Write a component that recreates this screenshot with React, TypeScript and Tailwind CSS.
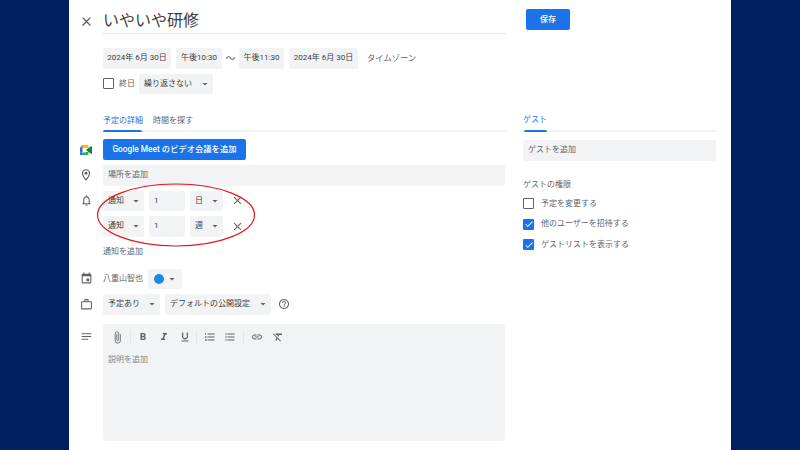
import type { ReactNode } from "react";
import {
  MdArrowDropDown,
  MdAttachFile,
  MdCheck,
  MdClose,
  MdEvent,
  MdFormatBold,
  MdFormatClear,
  MdFormatItalic,
  MdFormatListBulleted,
  MdFormatListNumbered,
  MdFormatUnderlined,
  MdHelpOutline,
  MdLink,
  MdNotes,
  MdOutlineLocationOn,
  MdOutlineNotifications,
  MdOutlineWorkOutline,
} from "react-icons/md";

function Chip({ children, className = "" }: { children: ReactNode; className?: string }) {
  return (
    <div className={`flex h-[20.5px] items-center whitespace-nowrap rounded-[2px] bg-[#f1f3f4] pl-[5px] text-[8px] text-[#3c4043] ${className}`}>
      {children}
    </div>
  );
}

function Select({ label, className = "" }: { label: string; className?: string }) {
  return (
    <Chip className={`justify-between pr-[2px] ${className}`}>
      <span>{label}</span>
      <MdArrowDropDown className="text-[12px] text-[#5f6368]" />
    </Chip>
  );
}

function Row({ icon, className = "", children }: { icon?: ReactNode; className?: string; children: ReactNode }) {
  return (
    <div className={`flex ${className}`}>
      <div className="flex w-[34px] shrink-0 items-center justify-center text-[#5f6368]">{icon}</div>
      {children}
    </div>
  );
}

function Reminder({ unit }: { unit: string }) {
  return (
    <div className="flex items-center gap-[5px]">
      <Select label="通知" className="w-[41px]" />
      <Chip className="w-[36px] text-[8.7px]">1</Chip>
      <Select label={unit} className="w-[33px]" />
      <MdClose className="ml-[3px] text-[13px] text-[#5f6368]" />
    </div>
  );
}

function Permission({ label, checked }: { label: string; checked?: boolean }) {
  return (
    <div className="flex h-[20.5px] items-center gap-[7px] whitespace-nowrap text-[8px] text-[#5f6368]">
      {checked ? (
        <span className="flex h-[11px] w-[11px] items-center justify-center rounded-[1px] bg-[#1a73e8]">
          <MdCheck className="text-[10px] text-white" />
        </span>
      ) : (
        <span className="h-[11px] w-[11px] rounded-[1px] border-[1.5px] border-[#5f6368]" />
      )}
      <span>{label}</span>
    </div>
  );
}

function MeetLogo() {
  return (
    <svg width="12" height="10" viewBox="0 0 24 20">
      <path d="M0 5 L5 0 H15 V5 H5 V5 H0 Z" fill="#ea4335" />
      <path d="M5 0 H15 Q17 0 17 2 V6 H12 V5 H5 Z" fill="#fbbc04" />
      <path d="M0 5 H5 V15 H0 Z" fill="#1a73e8" />
      <path d="M0 15 H5 V20 H2 Q0 20 0 18 Z" fill="#1967d2" />
      <path d="M5 15 H12 V14 H17 V18 Q17 20 15 20 H5 Z" fill="#34a853" />
      <path d="M12 10 L17 6 L23 2 Q24 2 24 3 V17 Q24 18 23 18 L17 14 Z" fill="#188038" />
    </svg>
  );
}

export default function App() {
  return (
    <div className="flex h-[450px] w-[800px] justify-center overflow-hidden bg-[#012060] font-['Roboto','Noto_Sans_CJK_JP',sans-serif]">
      <div className="relative flex h-full w-[662px] bg-white">
        <div className="w-[438px] shrink-0">
          <Row icon={<MdClose className="text-[15px]" />} className="mt-[8px] h-[26px]">
            <div className="w-[404px] border-b border-[#e4e6e8] pt-[1px] text-[16px] leading-[24px] text-[#3c4043]">いやいや研修</div>
          </Row>

          <Row className="mt-[14px]">
            <div className="flex items-center whitespace-nowrap text-[#3c4043]">
              <Chip className="w-[68px] justify-center pr-[5px] text-[8.7px]">2024年 6月 30日</Chip>
              <Chip className="ml-[5px] w-[46px] justify-center pr-[5px] text-[8.7px]">午後10:30</Chip>
              <span className="w-[17px] text-center text-[10px] text-[#5f6368]">〜</span>
              <Chip className="w-[45px] justify-center pr-[5px] text-[8.7px]">午後11:30</Chip>
              <Chip className="ml-[5px] w-[69px] justify-center pr-[5px] text-[8.7px]">2024年 6月 30日</Chip>
              <span className="ml-[9px] text-[8.3px] text-[#5f6368]">タイムゾーン</span>
            </div>
          </Row>

          <Row className="mt-[5px]">
            <div className="flex items-center">
              <span className="h-[11px] w-[11px] rounded-[1px] border-[1.5px] border-[#5f6368]" />
              <span className="ml-[5px] w-[20px] whitespace-nowrap text-[8px] text-[#5f6368]">終日</span>
              <Select label="繰り返さない" className="w-[74px]" />
            </div>
          </Row>

          <Row className="mt-[17px]">
            <div className="w-[404px] border-b-2 border-[#f1f3f4]">
              <div className="flex gap-[10px] whitespace-nowrap text-[8px] leading-[17px] text-[#5f6368]">
                <div className="relative h-[19px] w-[40px] pt-[1px] text-[#1a73e8]">
                  予定の詳細
                  <div className="absolute bottom-[-2px] left-0 h-[2px] w-[39px] rounded-t-[2px] bg-[#1a73e8]" />
                </div>
                <div className="pt-[1px]">時間を探す</div>
              </div>
            </div>
          </Row>

          <Row icon={<MeetLogo />} className="mt-[7px]">
            <div className="flex h-[21px] w-[143px] items-center justify-center whitespace-nowrap rounded-[2px] bg-[#1a73e8] text-[8.3px] font-medium text-white">
              Google Meet のビデオ会議を追加
            </div>
          </Row>

          <Row icon={<MdOutlineLocationOn className="text-[14px]" />} className="mt-[5px]">
            <Chip className="w-[402px] text-[#5f6368]">場所を追加</Chip>
          </Row>

          <Row icon={<MdOutlineNotifications className="text-[13px]" />} className="mt-[5px]">
            <Reminder unit="日" />
          </Row>

          <Row className="mt-[5px]">
            <Reminder unit="週" />
          </Row>

          <Row className="mt-[8px]">
            <div className="whitespace-nowrap text-[8px] leading-[13px] text-[#5f6368]">通知を追加</div>
          </Row>

          <Row icon={<MdEvent className="text-[13px]" />} className="mt-[11px]">
            <div className="flex items-center">
              <span className="w-[45px] whitespace-nowrap text-[8px] text-[#5f6368]">八重山智也</span>
              <Chip className="w-[34px] gap-[2px] pl-[6px]">
                <span className="h-[10px] w-[10px] rounded-full bg-[#1e88e5]" />
                <MdArrowDropDown className="text-[12px] text-[#5f6368]" />
              </Chip>
            </div>
          </Row>

          <Row icon={<MdOutlineWorkOutline className="text-[13px]" />} className="mt-[5px]">
            <div className="flex items-center gap-[5px]">
              <Select label="予定あり" className="w-[57px]" />
              <Select label="デフォルトの公開設定" className="w-[106px]" />
              <MdHelpOutline className="ml-[2px] text-[12px] text-[#5f6368]" />
            </div>
          </Row>

          <div className="mt-[9px] flex">
            <div className="flex w-[34px] shrink-0 justify-center pt-[6px] text-[#5f6368]">
              <MdNotes className="text-[13px]" />
            </div>
            <div className="h-[117px] w-[402px] rounded-[2px] bg-[#f1f3f4] px-[5px] text-[#5f6368]">
              <div className="flex h-[27px] items-center text-[11px]">
                <MdAttachFile className="ml-[3px] text-[13px]" />
                <span className="ml-[6px] mr-[6px] h-[14px] w-px bg-[#e4e6e8]" />
                <MdFormatBold className="mr-[9px] text-[12px]" />
                <MdFormatItalic className="mr-[9px] text-[12px]" />
                <MdFormatUnderlined className="mr-[5px] text-[12px]" />
                <span className="mr-[7px] h-[14px] w-px bg-[#e4e6e8]" />
                <MdFormatListNumbered className="mr-[8px] text-[12px]" />
                <MdFormatListBulleted className="mr-[7px] text-[12px]" />
                <span className="mr-[7px] h-[14px] w-px bg-[#e4e6e8]" />
                <MdLink className="mr-[9px] text-[12px]" />
                <MdFormatClear className="text-[12px]" />
              </div>
              <div className="mt-[2px] whitespace-nowrap text-[8px] leading-[13px] text-[#80868b]">説明を追加</div>
            </div>
          </div>
        </div>

        <div className="ml-[16px] w-[193px]">
          <div className="ml-[3px] mt-[9px] flex h-[21px] w-[44px] items-center justify-center rounded-[2px] bg-[#1a73e8] text-[8px] font-medium text-white">
            保存
          </div>
          <div className="mt-[80px] border-b-2 border-[#f1f3f4]">
            <div className="relative h-[20px] w-[25px] whitespace-nowrap pt-[1px] text-[8px] leading-[17px] text-[#1a73e8]">
              ゲスト
              <div className="absolute bottom-[-2px] left-[1px] h-[2px] w-[23px] rounded-t-[2px] bg-[#1a73e8]" />
            </div>
          </div>
          <Chip className="mt-[8px] text-[#5f6368]">ゲストを追加</Chip>
          <div className="mt-[17px] whitespace-nowrap text-[8px] leading-[13px] text-[#5f6368]">ゲストの権限</div>
          <div className="mt-[3px]">
            <Permission label="予定を変更する" />
            <Permission label="他のユーザーを招待する" checked />
            <Permission label="ゲストリストを表示する" checked />
          </div>
        </div>

        <svg className="pointer-events-none absolute left-[27px] top-[183px]" width="160" height="64" viewBox="0 0 160 64">
          <ellipse cx="80" cy="32" rx="78.5" ry="31" fill="none" stroke="#e8141c" strokeWidth="1.2" />
        </svg>
      </div>
    </div>
  );
}
